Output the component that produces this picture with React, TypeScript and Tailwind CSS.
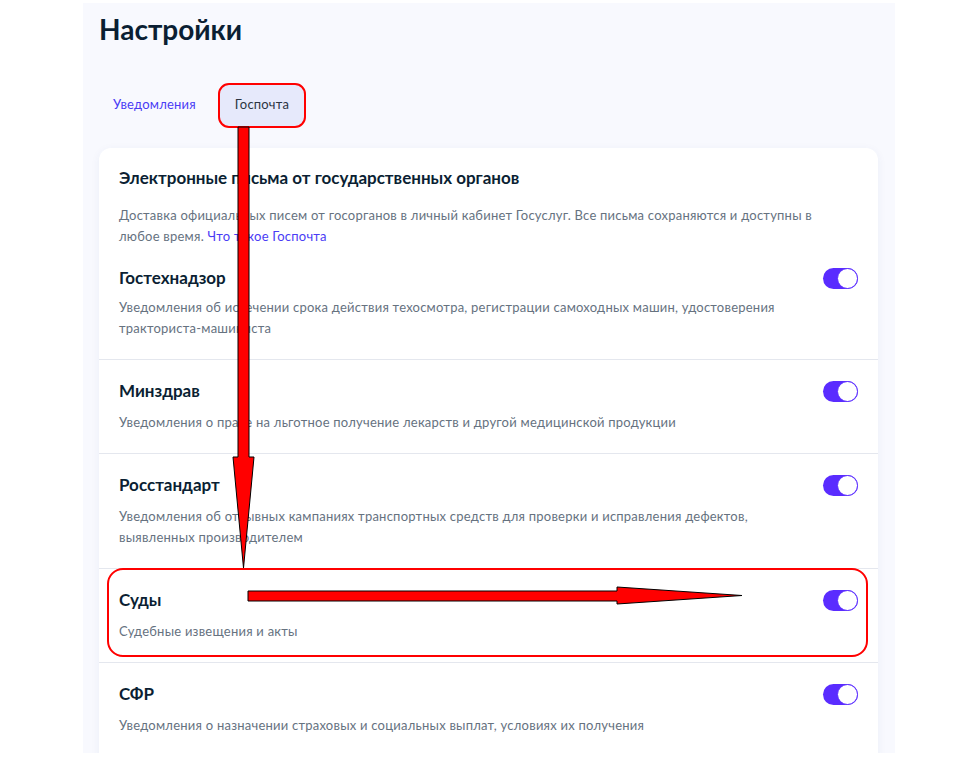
const rows = [
  {
    title: 'Гостехнадзор',
    text: 'Уведомления об истечении срока действия техосмотра, регистрации самоходных машин, удостоверения тракториста-машиниста',
  },
  {
    title: 'Минздрав',
    text: 'Уведомления о праве на льготное получение лекарств и другой медицинской продукции',
  },
  {
    title: 'Росстандарт',
    text: 'Уведомления об отзывных кампаниях транспортных средств для проверки и исправления дефектов, выявленных производителем',
  },
  {
    title: 'Суды',
    text: 'Судебные извещения и акты',
  },
  {
    title: 'СФР',
    text: 'Уведомления о назначении страховых и социальных выплат, условиях их получения',
  },
]

function Toggle() {
  return (
    <div className="flex h-[21px] w-[35px] shrink-0 items-center justify-end rounded-full bg-[#5a2cff]">
      <div className="h-[21px] w-[21px] rounded-full border-[1.5px] border-[#5a2cff] bg-white" />
    </div>
  )
}

function Row({ title, text, first }: { title: string; text: string; first?: boolean }) {
  return (
    <div className={first ? 'px-5 pt-5 pb-5' : 'border-t border-[#e4e7ee] px-5 pt-5 pb-5'}>
      <div className="flex items-center justify-between">
        <h4 className="text-[17px] leading-[22px] font-bold text-[#0b1f33]">{title}</h4>
        <Toggle />
      </div>
      <p className={`${first ? 'mt-2' : 'mt-2.5'} pr-16 text-[13px] leading-[21px] tracking-[0.23px] text-[#66727f]`}>
        {text}
      </p>
    </div>
  )
}

export default function App() {
  return (
    <div className="relative h-[769px] w-[958px] overflow-hidden bg-white font-['Lato',sans-serif]">
      <div className="mt-[3px] ml-[83px] h-[750px] w-[812px] overflow-hidden bg-[#f8f9fe] pt-[9px] pl-4 pr-[17px]">
        <h1 className="text-[28px] leading-[34px] font-bold text-[#0b1f33]">Настройки</h1>

        <div className="mt-[37px] flex gap-2.5">
          <button type="button" className="h-[44px] rounded-lg px-[14px] text-[13px] tracking-[0.2px] text-[#4a3cf5]">
            Уведомления
          </button>
          <button type="button" className="h-[44px] rounded-lg bg-[#e6e9fb] px-[15px] text-[13px] tracking-[0.2px] text-[#2c3542]">
            Госпочта
          </button>
        </div>

        <div className="mt-[21px] rounded-t-xl bg-white pt-[19px] shadow-[0_2px_10px_rgba(40,60,140,0.06)]">
          <div className="px-5">
            <h3 className="text-[17px] leading-[22px] font-bold text-[#0b1f33]">
              Электронные письма от государственных органов
            </h3>
            <p className="mt-4 pr-8 text-[13px] leading-[21px] tracking-[0.23px] text-[#66727f]">
              Доставка официальных писем от госорганов в личный кабинет Госуслуг. Все письма сохраняются и доступны в
              любое время. <span className="text-[#4a3cf5]">Что такое Госпочта</span>
            </p>
          </div>

          {rows.map((row, i) => (
            <Row key={row.title} title={row.title} text={row.text} first={i === 0} />
          ))}
        </div>
      </div>

      {/* annotation marks */}
      <div className="pointer-events-none absolute top-[83px] left-[218px] h-[45px] w-[88px] rounded-[11px] border-[2.5px] border-[#ff0000]" />
      <div className="pointer-events-none absolute top-[568px] left-[107px] h-[89px] w-[761px] rounded-[16px] border-[2.5px] border-[#ff0000]" />
      <svg className="pointer-events-none absolute inset-0" width="958" height="769" viewBox="0 0 958 769">
        <polygon
          points="238,127 249,127 249,457 254,457 243.5,568 233,457 238,457"
          fill="#ff0000"
          stroke="#000"
          strokeWidth="1"
        />
        <polygon
          points="248,591 617,591 617,587 742,595.5 617,604 617,601 248,601"
          fill="#ff0000"
          stroke="#000"
          strokeWidth="1"
        />
      </svg>
    </div>
  )
}
